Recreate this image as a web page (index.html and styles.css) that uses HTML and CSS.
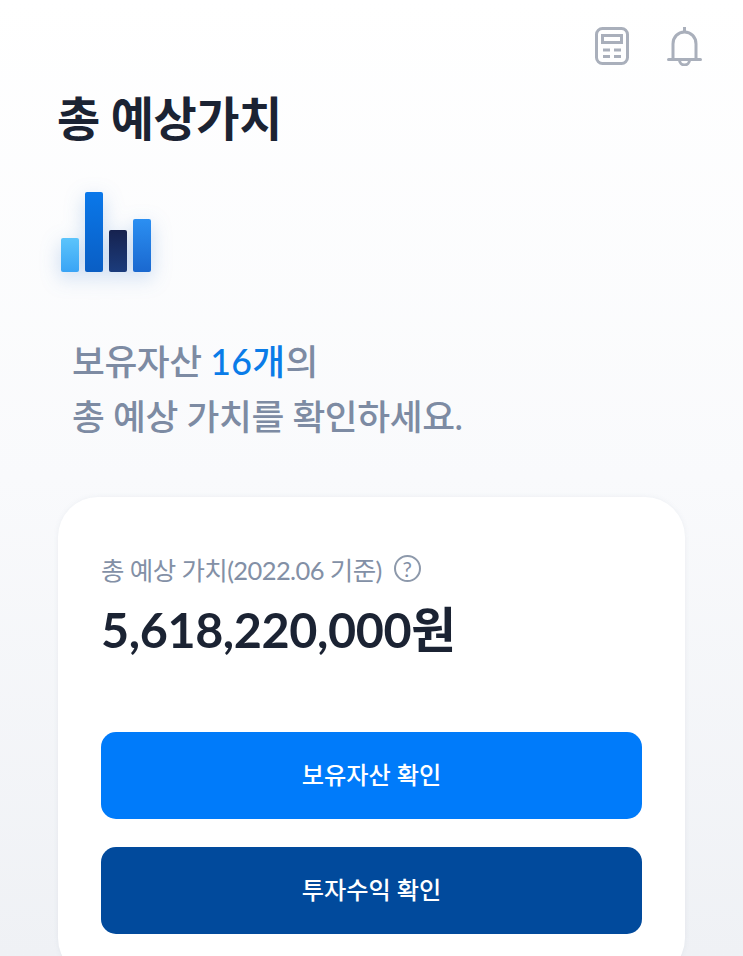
FILE: index.html
```html
<!DOCTYPE html>
<html lang="ko">
<head>
    <meta charset="UTF-8">
    <meta name="viewport" content="width=device-width, initial-scale=1.0">
    <title>총 예상가치</title>
    <link rel="stylesheet" href="styles.css">
</head>
<body>
    <div class="page">
        <div class="top-icons">
            <svg class="icon" width="34" height="38" viewBox="0 0 34 38" fill="none" stroke="#a9afbb" stroke-width="3">
                <rect x="1.500" y="1.500" width="31" height="35" rx="6"/>
                <rect x="7.500" y="8.500" width="19" height="7"/>
                <path d="M8 23h7M19 23h7M8 29.500h7M19 29.500h7"/>
            </svg>
            <svg class="icon" width="35" height="39" viewBox="0 0 35 39" fill="none" stroke="#a9afbb" stroke-width="3">
                <path d="M6 32V17C6 10 11 5 17.500 5S29 10 29 17v15"/>
                <path d="M1.500 32.500h32" stroke-linecap="round"/>
                <path d="M17.500 0v5"/>
                <path d="M12.500 33a5 5 0 0 0 10 0"/>
            </svg>
        </div>

        <h1>총 예상가치</h1>

        <div class="chart">
            <div class="bar bar-light"></div>
            <div class="bar bar-blue"></div>
            <div class="bar bar-navy"></div>
            <div class="bar bar-mid"></div>
        </div>

        <p class="intro">보유자산 <span class="accent">16개</span>의<br>총 예상 가치를 확인하세요.</p>

        <div class="card">
            <div class="label">
                <span>총 예상 가치(2022.06 기준)</span>
                <span class="help">?</span>
            </div>
            <div class="amount">5,618,220,000원</div>
            <button class="btn btn-primary">보유자산 확인</button>
            <button class="btn btn-dark">투자수익 확인</button>
        </div>
    </div>
</body>
</html>
```

FILE: styles.css
```css
* {
    box-sizing: border-box;
}

html, body {
    margin: 0;
    padding: 0;
    height: 100%;
    overflow: hidden;
}

body {
    font-family: 'Lato', 'Noto Sans CJK KR', sans-serif;
    background: linear-gradient(180deg, #ffffff 0%, #f9fafc 50%, #eff1f5 100%);
    color: #1b2333;
}

.page {
    padding: 27px 58px 0;
}

.top-icons {
    display: flex;
    justify-content: flex-end;
    gap: 38px;
    margin-right: -17px;
}

.icon {
    display: block;
}

h1 {
    margin: 20px 0 0 -1px;
    font-size: 47px;
    line-height: 64px;
    font-weight: 700;
    letter-spacing: -0.5px;
}

.chart {
    display: flex;
    align-items: flex-end;
    gap: 6px;
    height: 81px;
    margin: 41px 0 0 3px;
    width: 91px;
    filter: drop-shadow(0 6px 10px rgba(40, 110, 200, 0.25));
}

.bar {
    width: 18px;
    border-radius: 2px;
}

.bar-light {
    height: 34px;
    background: linear-gradient(180deg, #5cc4fb, #3aa4f5);
}

.bar-blue {
    height: 80px;
    background: linear-gradient(180deg, #0a78ea, #0a5ec4);
}

.bar-navy {
    height: 42px;
    background: linear-gradient(180deg, #16224f, #1b3c7c);
}

.bar-mid {
    height: 53px;
    background: linear-gradient(180deg, #2b8ff2, #1a68cf);
}

.intro {
    margin: 62px 0 0 14px;
    font-size: 35.7px;
    line-height: 55px;
    font-weight: 500;
    color: #7d8ba3;
    letter-spacing: -0.4px;
}

.accent {
    color: #0a7ce8;
    letter-spacing: 0.3px;
}

.card {
    margin-top: 53px;
    width: 627px;
    height: 481px;
    padding: 51px 43px 0;
    background: #fff;
    border-radius: 40px;
    box-shadow: 0 0 5px rgba(120, 135, 160, 0.1);
}

.label {
    display: flex;
    align-items: center;
    gap: 12px;
    height: 40px;
    font-size: 25.5px;
    color: #8390a6;
    letter-spacing: -0.6px;
}

.help {
    display: flex;
    align-items: center;
    justify-content: center;
    width: 27px;
    height: 27px;
    border: 2px solid #8d99ab;
    border-radius: 50%;
    font-size: 21px;
    letter-spacing: 0;
}

.amount {
    margin-top: 9px;
    font-size: 48.5px;
    line-height: 64px;
    font-weight: 700;
    letter-spacing: -0.4px;
}

.btn {
    display: block;
    width: 541px;
    height: 87px;
    padding: 0 0 5px;
    border: none;
    border-radius: 15px;
    font-family: inherit;
    font-size: 24.2px;
    font-weight: 500;
    color: #fff;
}

.btn-primary {
    margin-top: 71px;
    background: #007bfa;
}

.btn-dark {
    margin-top: 28px;
    background: #014a9c;
}
```
